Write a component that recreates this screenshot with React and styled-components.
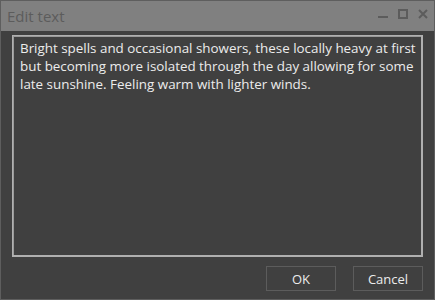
import React from "react";
import styled, { createGlobalStyle } from "styled-components";

const Global = createGlobalStyle`
  html, body { margin: 0; padding: 0; background: #404040; }
  body { font-family: "Open Sans", "Noto Sans", sans-serif; }
`;

const Window = styled.div`
  box-sizing: border-box;
  width: 435px;
  height: 300px;
  border: 1px solid #5e5e5e;
  background: #404040;
  display: flex;
  flex-direction: column;
`;

const TitleBar = styled.div`
  height: 30px;
  background: #808080;
  display: flex;
  align-items: center;
  justify-content: space-between;
  padding: 0 6px 0 6px;
`;

const Title = styled.div`
  color: #5c5c5c;
  font-size: 15px;
  margin-top: 0px;
`;

const Controls = styled.div`
  display: flex;
  align-items: center;
  gap: 10px;
  margin-top: -4px;
`;

const Body = styled.div`
  flex: 1;
  display: flex;
  flex-direction: column;
  padding: 4px 11px 8px 11px;
`;

const TextArea = styled.div`
  flex: 1;
  border: 2px solid #b0b0b0;
  border-width: 1px 2px 2px 1px;
  box-shadow: inset 1px 1px 0 #9a9a9a;
  color: #ececec;
  font-size: 13.4px;
  line-height: 18px;
  padding: 3px 4px 0 7px;
`;

const Footer = styled.div`
  display: flex;
  justify-content: flex-end;
  gap: 17px;
  margin-top: 9px;
`;

const Button = styled.div`
  box-sizing: border-box;
  width: 70px;
  height: 25px;
  border: 1px solid #5c5c5c;
  color: #ececec;
  font-size: 13px;
  display: flex;
  align-items: center;
  justify-content: center;
`;

export default function App() {
  return (
    <>
      <Global />
      <Window>
        <TitleBar>
          <Title>Edit text</Title>
          <Controls>
            <svg width="10" height="10" viewBox="0 0 10 10">
              <rect x="0" y="7" width="10" height="2" fill="#5c5c5c" />
            </svg>
            <svg width="10" height="10" viewBox="0 0 10 10">
              <rect x="1" y="1" width="8" height="8" fill="none" stroke="#5c5c5c" strokeWidth="2" />
            </svg>
            <svg width="10" height="10" viewBox="0 0 10 10">
              <path d="M1 1 L9 9 M9 1 L1 9" stroke="#5c5c5c" strokeWidth="2" />
            </svg>
          </Controls>
        </TitleBar>
        <Body>
          <TextArea>
            Bright spells and occasional showers, these locally heavy at first but becoming more isolated through the day allowing for some late sunshine. Feeling warm with lighter winds.
          </TextArea>
          <Footer>
            <Button>OK</Button>
            <Button>Cancel</Button>
          </Footer>
        </Body>
      </Window>
    </>
  );
}
